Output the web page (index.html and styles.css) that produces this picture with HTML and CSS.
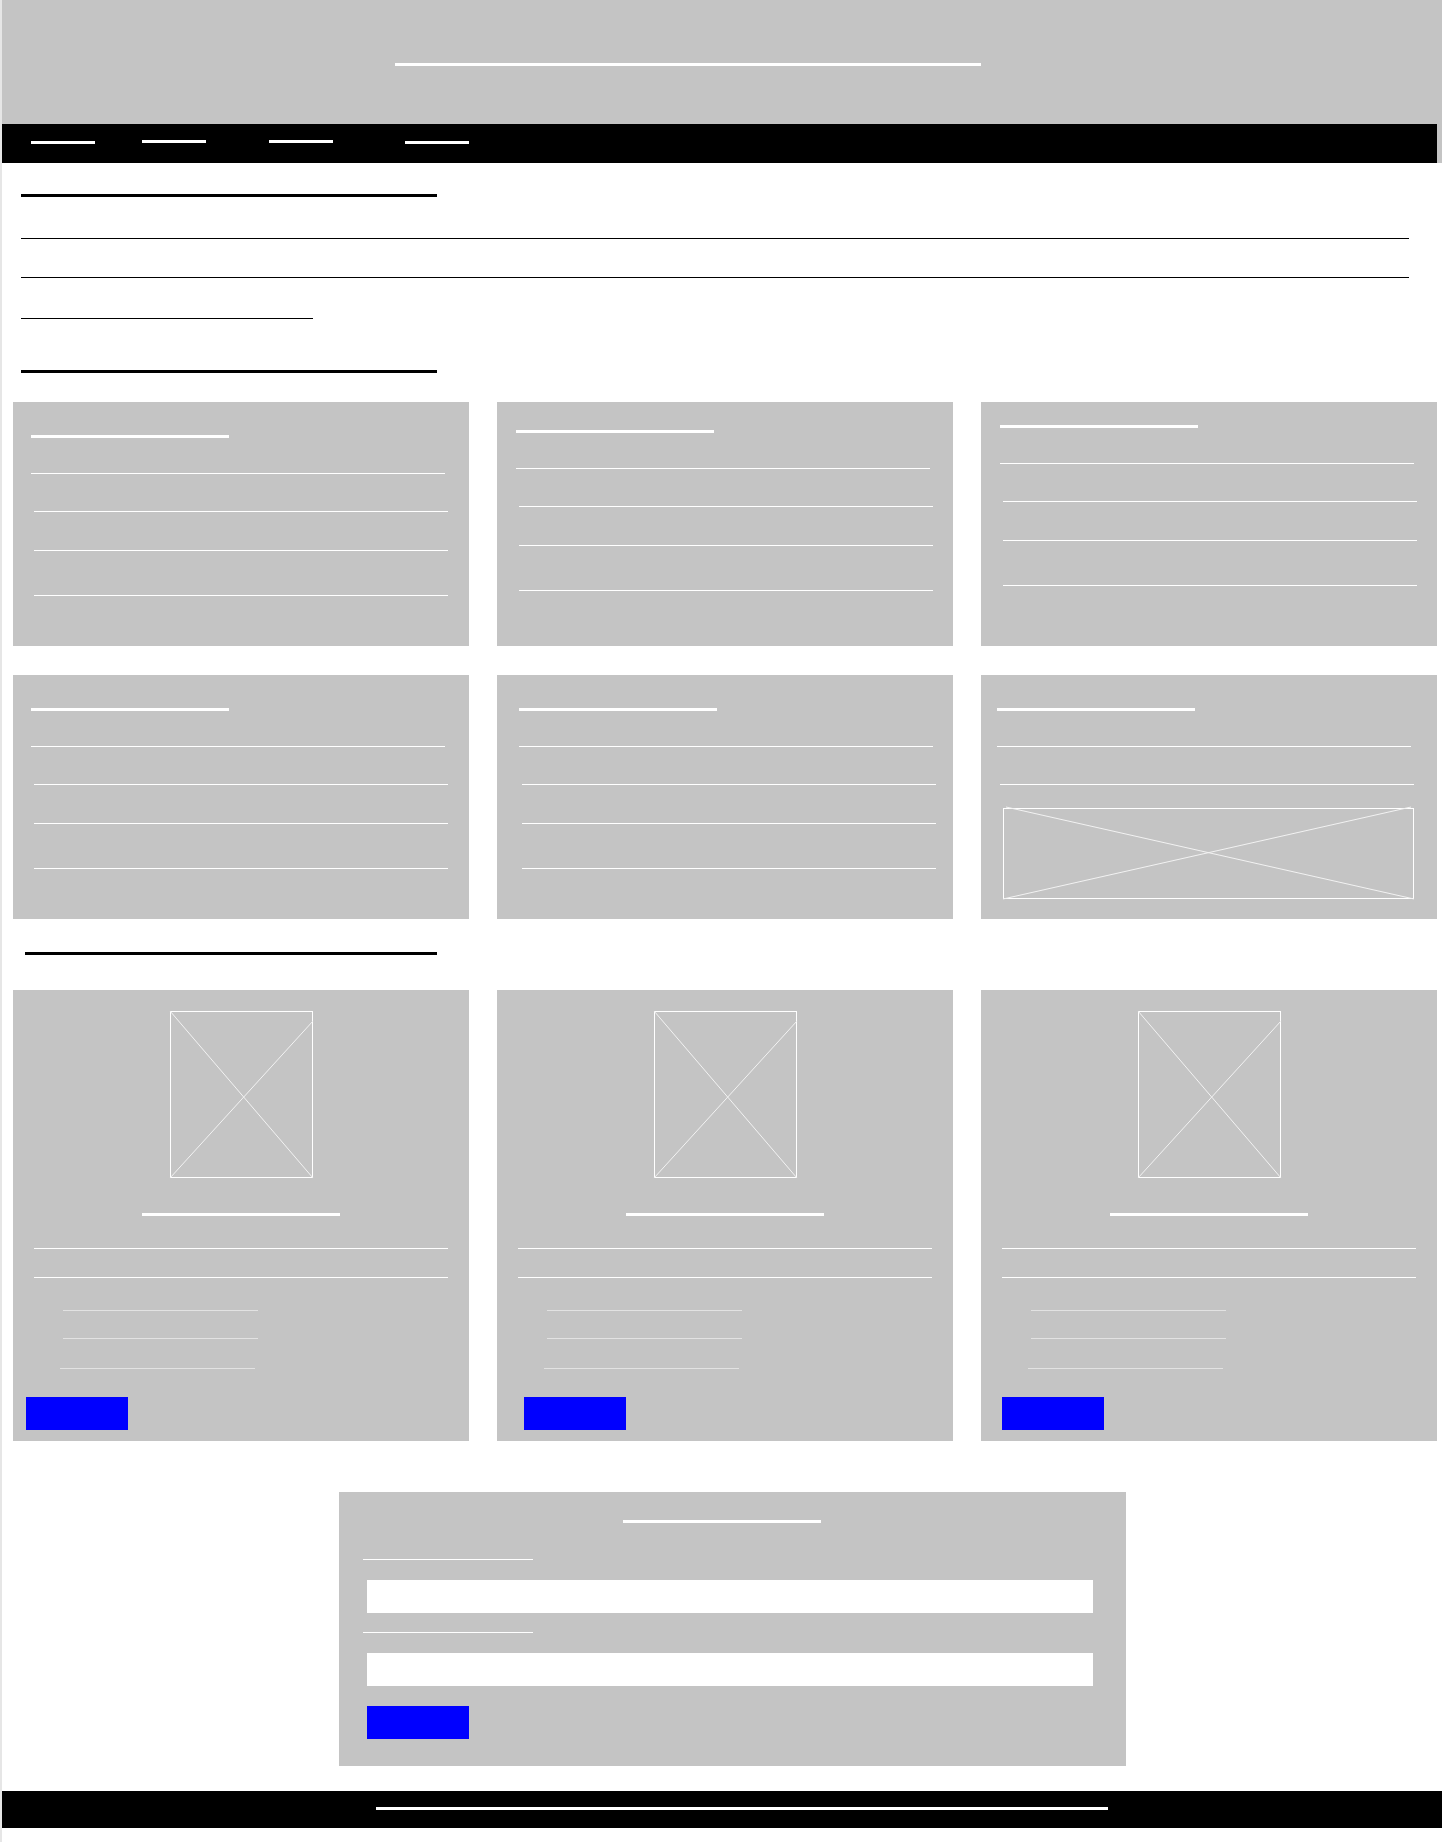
FILE: index.html
```html
<!DOCTYPE html>
<html lang="en">
<head>
    <meta charset="UTF-8">
    <title>Wireframe</title>
    <link rel="stylesheet" href="styles.css">
</head>
<body>
    <div class="top">
        <header class="site-header">
            <div class="site-title"></div>
        </header>

        <nav class="site-nav">
            <a class="nav-link" href="#"></a>
            <a class="nav-link" href="#"></a>
            <a class="nav-link" href="#"></a>
            <a class="nav-link" href="#"></a>
        </nav>
    </div>

    <main>
        <section class="intro">
            <div class="heading"></div>
            <div class="text-line"></div>
            <div class="text-line"></div>
            <div class="text-line text-line--short"></div>
        </section>

        <div class="heading heading--features"></div>

        <section class="card-grid">
            <div class="card">
                <div class="card-title"></div>
                <div class="card-line"></div>
                <div class="card-line card-line--indent"></div>
                <div class="card-line card-line--indent"></div>
                <div class="card-line card-line--indent"></div>
            </div>
            <div class="card card--up1">
                <div class="card-title"></div>
                <div class="card-line"></div>
                <div class="card-line card-line--indent"></div>
                <div class="card-line card-line--indent"></div>
                <div class="card-line card-line--indent"></div>
            </div>
            <div class="card card--up2">
                <div class="card-title"></div>
                <div class="card-line"></div>
                <div class="card-line card-line--indent"></div>
                <div class="card-line card-line--indent"></div>
                <div class="card-line card-line--indent"></div>
            </div>
            <div class="card">
                <div class="card-title"></div>
                <div class="card-line"></div>
                <div class="card-line card-line--indent"></div>
                <div class="card-line card-line--indent"></div>
                <div class="card-line card-line--indent"></div>
            </div>
            <div class="card card--right">
                <div class="card-title"></div>
                <div class="card-line"></div>
                <div class="card-line card-line--indent"></div>
                <div class="card-line card-line--indent"></div>
                <div class="card-line card-line--indent"></div>
            </div>
            <div class="card card--left">
                <div class="card-title"></div>
                <div class="card-line"></div>
                <div class="card-line card-line--indent"></div>
                <svg class="placeholder placeholder--wide" width="411" height="91" viewBox="0 0 411 91">
                    <rect x="0.5" y="0.5" width="410" height="90" fill="none" stroke="#fff"/>
                    <line x1="3" y1="-1" x2="411" y2="91" stroke="#f2f2f2"/>
                    <line x1="408" y1="-1" x2="0" y2="91" stroke="#f2f2f2"/>
                </svg>
            </div>
        </section>

        <div class="heading heading--products"></div>

        <section class="card-grid card-grid--products">
            <div class="product">
                <svg class="placeholder" width="143" height="167" viewBox="0 0 143 167">
                    <rect x="0.5" y="0.5" width="142" height="166" fill="none" stroke="#fff"/>
                    <line x1="0" y1="0" x2="143" y2="167" stroke="#f2f2f2"/>
                    <line x1="143" y1="10" x2="0" y2="167" stroke="#f2f2f2"/>
                </svg>
                <div class="product-title"></div>
                <div class="product-line"></div>
                <div class="product-line"></div>
                <div class="list-line"></div>
                <div class="list-line"></div>
                <div class="list-line list-line--last"></div>
                <button class="btn product-btn"></button>
            </div>
            <div class="product">
                <svg class="placeholder" width="143" height="167" viewBox="0 0 143 167">
                    <rect x="0.5" y="0.5" width="142" height="166" fill="none" stroke="#fff"/>
                    <line x1="0" y1="0" x2="143" y2="167" stroke="#f2f2f2"/>
                    <line x1="143" y1="10" x2="0" y2="167" stroke="#f2f2f2"/>
                </svg>
                <div class="product-title"></div>
                <div class="product-line"></div>
                <div class="product-line"></div>
                <div class="list-line"></div>
                <div class="list-line"></div>
                <div class="list-line list-line--last"></div>
                <button class="btn product-btn"></button>
            </div>
            <div class="product">
                <svg class="placeholder" width="143" height="167" viewBox="0 0 143 167">
                    <rect x="0.5" y="0.5" width="142" height="166" fill="none" stroke="#fff"/>
                    <line x1="0" y1="0" x2="143" y2="167" stroke="#f2f2f2"/>
                    <line x1="143" y1="10" x2="0" y2="167" stroke="#f2f2f2"/>
                </svg>
                <div class="product-title"></div>
                <div class="product-line"></div>
                <div class="product-line"></div>
                <div class="list-line"></div>
                <div class="list-line"></div>
                <div class="list-line list-line--last"></div>
                <button class="btn product-btn"></button>
            </div>
        </section>

        <form class="contact-form" onsubmit="return false">
            <div class="form-title"></div>
            <label class="form-label" for="field1"></label>
            <input class="form-input" type="text" id="field1">
            <label class="form-label" for="field2"></label>
            <input class="form-input" type="text" id="field2">
            <button class="btn form-btn" type="submit"></button>
        </form>
    </main>

    <footer class="site-footer">
        <div class="footer-line"></div>
    </footer>
</body>
</html>
```

FILE: styles.css
```css
* {
    margin: 0;
    padding: 0;
    box-sizing: border-box;
}

body {
    font-family: "Liberation Sans", Arial, sans-serif;
    background: #fff;
    border-left: 2px solid #e6e6e6;
    min-height: 100vh;
}

/* header + nav */

.top {
    background: #c4c4c4;
}

.site-header {
    height: 124px;
    padding-top: 63px;
}

.site-title {
    width: 586px;
    height: 3px;
    margin-left: 393px;
    background: #fff;
}

.site-nav {
    display: flex;
    align-items: flex-start;
    height: 39px;
    margin-right: 5px;
    padding: 17px 0 0 29px;
    background: #000;
}

.nav-link {
    display: block;
    width: 64px;
    height: 3px;
    background: #fff;
}

.nav-link:nth-child(2) {
    margin: -1px 0 0 47px;
}

.nav-link:nth-child(3) {
    margin: -1px 0 0 63px;
}

.nav-link:nth-child(4) {
    margin-left: 72px;
}

/* intro */

.heading {
    width: 416px;
    height: 3px;
    margin-left: 19px;
    background: #000;
}

.intro {
    padding-top: 31px;
}

.text-line {
    width: 1388px;
    height: 1px;
    margin: 41px 0 0 19px;
    background: #000;
}

.text-line + .text-line {
    margin-top: 38px;
}

.text-line--short {
    width: 292px;
}

.text-line + .text-line--short {
    margin-top: 40px;
}

.heading--features {
    margin-top: 51px;
}

.heading--products {
    width: 412px;
    margin: 33px 0 0 23px;
}

/* cards */

.card-grid {
    display: grid;
    grid-template-columns: repeat(3, 456px);
    column-gap: 28px;
    row-gap: 29px;
    margin: 29px 0 0 11px;
}

.card {
    height: 244px;
    padding: 33px 0 0 18px;
    background: #c4c4c4;
}

.card--up1 {
    padding: 28px 0 0 19px;
}

.card--up2 {
    padding: 23px 0 0 19px;
}

.card--right {
    padding-left: 22px;
}

.card--left {
    padding-left: 16px;
}

.card-title {
    width: 198px;
    height: 3px;
    background: #fff;
}

.card-line {
    width: 414px;
    height: 1px;
    margin-top: 35px;
    background: #fff;
}

.card-line--indent {
    margin-left: 3px;
}

.card-line:nth-child(3) {
    margin-top: 37px;
}

.card-line:nth-child(4) {
    margin-top: 38px;
}

.card-line:nth-child(5) {
    margin-top: 44px;
}

.placeholder {
    display: block;
    overflow: visible;
}

.placeholder--wide {
    margin: 23px 0 0 6px;
}

/* products */

.card-grid--products {
    margin-top: 35px;
}

.product {
    height: 451px;
    padding-top: 21px;
    background: #c4c4c4;
}

.product .placeholder {
    margin: 0 auto;
}

.product-title {
    width: 198px;
    height: 3px;
    margin: 35px auto 0;
    background: #fff;
}

.product-line {
    width: 414px;
    height: 1px;
    margin: 32px 0 0 21px;
    background: #fff;
}

.product-line + .product-line {
    margin-top: 28px;
}

.list-line {
    width: 195px;
    height: 1px;
    margin: 32px 0 0 50px;
    background: #e2e2e2;
}

.list-line + .list-line {
    margin-top: 27px;
}

.list-line + .list-line--last {
    margin: 29px 0 0 47px;
}

.btn {
    display: block;
    width: 102px;
    height: 33px;
    border: none;
    background: #00f;
    cursor: pointer;
}

.product-btn {
    margin: 28px 0 0 13px;
}

.product:nth-child(2) .product-btn {
    margin-left: 27px;
}

.product:nth-child(3) .product-btn {
    margin-left: 21px;
}

/* form */

.contact-form {
    width: 787px;
    height: 274px;
    margin: 51px 0 0 337px;
    padding-top: 28px;
    background: #c4c4c4;
}

.form-title {
    width: 198px;
    height: 3px;
    margin-left: 284px;
    background: #fff;
}

.form-label {
    display: block;
    width: 170px;
    height: 1px;
    margin: 36px 0 0 24px;
    background: #fff;
}

.form-input + .form-label {
    margin-top: 19px;
}

.form-input {
    display: block;
    width: 726px;
    height: 33px;
    margin: 20px 0 0 28px;
    border: none;
    background: #fff;
}

.form-btn {
    margin: 20px 0 0 28px;
}

/* footer */

.site-footer {
    height: 37px;
    margin-top: 25px;
    padding-top: 16px;
    background: #000;
}

.footer-line {
    width: 732px;
    height: 3px;
    margin-left: 374px;
    background: #fff;
}
```
